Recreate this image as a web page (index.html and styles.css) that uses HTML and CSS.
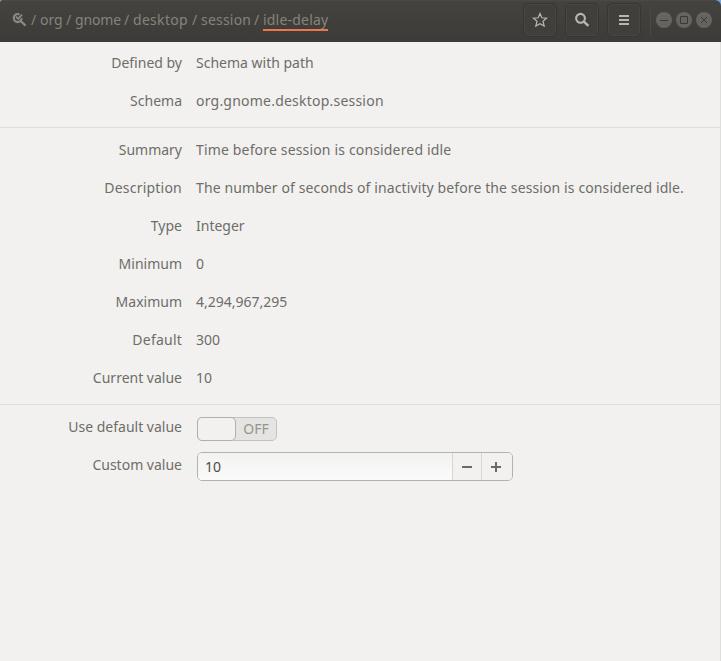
FILE: index.html
```html
<!DOCTYPE html>
<html lang="en">
<head>
<meta charset="utf-8">
<title>idle-delay</title>
<link rel="stylesheet" href="styles.css">
</head>
<body>
<div class="window">
  <header class="titlebar">
    <nav class="path">
      <svg class="path-icon" width="15" height="16" viewBox="0 0 15 16"><path d="M7.6 2.5A4 4 0 1 0 9.7 6.2M8.6 9l5 4.6" fill="none" stroke="currentColor" stroke-width="2.2"/><path d="M4 4.6l2.2 2.2 3.9-4.1" fill="none" stroke="currentColor" stroke-width="1.9"/></svg>
      <span class="slash">/</span><span class="crumb org">org</span>
      <span class="slash">/</span><span class="crumb gnome">gnome</span>
      <span class="slash">/</span><span class="crumb desktop">desktop</span>
      <span class="slash">/</span><span class="crumb session">session</span>
      <span class="slash">/</span><span class="crumb current">idle-delay</span>
    </nav>
    <div class="tools">
      <button class="tool" aria-label="Bookmark"><svg width="16" height="16" viewBox="0 0 16 16"><path d="M8 1.5l1.8 4.3 4.8.4-3.6 3.1 1.2 4.8L8 11.7l-4.2 2.4L5 9.3 1.4 6.2l4.8-.4z" fill="none" stroke="currentColor" stroke-width="1.2"/></svg></button>
      <button class="tool" aria-label="Search"><svg width="16" height="16" viewBox="0 0 16 16"><circle cx="6.5" cy="6.3" r="4.4" fill="none" stroke="currentColor" stroke-width="2.1"/><path d="M9.6 9.4l4.8 4.5" stroke="currentColor" stroke-width="2.5"/></svg></button>
      <button class="tool" aria-label="Menu"><svg width="16" height="16" viewBox="0 0 16 16"><path d="M3 3h10v2H3zM3 7h10v2H3zM3 11h10v2H3z" fill="currentColor"/></svg></button>
    </div>
    <div class="controls">
      <button class="control" aria-label="Minimize"><svg width="16" height="16" viewBox="0 0 16 16"><path d="M4 8.5h8" stroke="currentColor"/></svg></button>
      <button class="control" aria-label="Maximize"><svg width="16" height="16" viewBox="0 0 16 16"><path d="M4.5 4.5h7v7h-7z" fill="none" stroke="currentColor"/></svg></button>
      <button class="control" aria-label="Close"><svg width="16" height="16" viewBox="0 0 16 16"><path d="M5 5l6 6M11 5l-6 6" stroke="currentColor"/></svg></button>
    </div>
  </header>
  <main>
    <section class="group first">
      <div class="row"><span class="label">Defined by</span><span>Schema with path</span></div>
      <div class="row"><span class="label">Schema</span><span class="loose">org.gnome.desktop.session</span></div>
    </section>
    <section class="group">
      <div class="row"><span class="label">Summary</span><span class="wide">Time before session is considered idle</span></div>
      <div class="row"><span class="label loose">Description</span><span class="prose">The number of seconds of inactivity before the session is considered idle.</span></div>
      <div class="row"><span class="label">Type</span><span>Integer</span></div>
      <div class="row"><span class="label">Minimum</span><span>0</span></div>
      <div class="row"><span class="label">Maximum</span><span>4,294,967,295</span></div>
      <div class="row"><span class="label loose">Default</span><span>300</span></div>
      <div class="row"><span class="label">Current value</span><span>10</span></div>
    </section>
    <section class="group last">
      <div class="row"><span class="label">Use default value</span><div class="switch"><span class="knob"></span><span class="state">OFF</span></div></div>
      <div class="row"><span class="label">Custom value</span><div class="spin"><span class="entry">10</span><button class="step" aria-label="Decrease"><svg width="10" height="10" viewBox="0 0 10 10"><path d="M0 4h10v2H0z" fill="currentColor"/></svg></button><button class="step" aria-label="Increase"><svg width="10" height="10" viewBox="0 0 10 10"><path d="M0 4h4V0h2v4h4v2H6v4H4V6H0z" fill="currentColor"/></svg></button></div></div>
    </section>
  </main>
</div>
</body>
</html>
```
FILE: styles.css
```css
* { box-sizing: border-box; }
body {
  margin: 0;
  background: #75a5dc;
  color: #6e6d69;
  font: 14px/20px "Noto Sans", "Open Sans", sans-serif;
}
button { padding: 0; font: inherit; }
svg { display: block; flex: none; }
.window {
  display: flex;
  flex-direction: column;
  height: 661px;
  border-radius: 3px 6px 0 0;
  overflow: hidden;
}
main { flex: 1; background: #f2f1ef; border-right: 1px solid #dededc; }
.titlebar {
  display: flex;
  height: 42px;
  background: linear-gradient(#444340, #3c3b37);
  border-top: 1px solid #4a4945;
  color: #85847c;
}
.path {
  display: flex;
  flex: 1;
  height: 38px;
  align-items: center;
  padding-left: 12px;
}
.path-icon { color: #8b8983; margin-right: 4px; }
.slash { width: 9px; }
.crumb { white-space: nowrap; }
.org { width: 26px; }
.gnome { width: 49px; letter-spacing: -0.15px; }
.desktop { width: 59px; letter-spacing: 0.3px; }
.session { width: 53px; letter-spacing: 0.2px; }
.current { width: 65px; height: 21px; border-bottom: 2px solid #ed764d; margin-top: 1px; line-height: 19px; letter-spacing: 0.2px; }
.tools { display: flex; gap: 8px; padding-top: 2px; }
.tool {
  display: flex;
  align-items: center;
  justify-content: center;
  width: 34px;
  height: 34px;
  background: #403f3b;
  border: 1px solid #373632;
  border-radius: 5px;
  box-shadow: inset 0 0 0 1px #474642;
  color: #b8b7ad;
}
.controls {
  display: flex;
  gap: 4px;
  height: 30px;
  margin: 4px 9px 0 9px;
  padding: 7px 0 0 5px;
  border-left: 1px solid #4a4945;
}
.control {
  width: 16px;
  height: 16px;
  border: 0;
  border-radius: 50%;
  background: #65645e;
  color: #3b3a36;
}
.group { padding: 3px 0 7px; border-bottom: 1px solid #dededc; }
.first { padding-top: 2px; }
.last { border: 0; }
.row { display: flex; height: 38px; align-items: center; white-space: nowrap; }
.label { width: 182px; margin-right: 14px; text-align: right; }
.loose { letter-spacing: 0.22px; }
.wide { letter-spacing: 0.16px; }
.prose { letter-spacing: 0.11px; }
.switch {
  display: flex;
  width: 80px;
  height: 24px;
  margin: 4px 0 0 1px;
  background: #e5e4e2;
  border: 1px solid #c3c2bf;
  border-radius: 5px;
  color: #96948f;
}
.knob { width: 39px; height: 24px; margin: -1px 0 0 -1px; background: #f2f1ef; border: 1px solid #b1b0ac; border-radius: 5px; }
.state { flex: 1; text-align: center; line-height: 21px; }
.spin {
  display: flex;
  width: 316px;
  height: 29px;
  margin: 3px 0 0 1px;
  border: 1px solid #b3b2ae;
  border-radius: 5px;
  overflow: hidden;
}
.entry { flex: 1; padding-left: 7px; line-height: 28px; color: #4c4b48; background: linear-gradient(#f2f2f1, #fafafa); }
.step {
  display: flex;
  align-items: center;
  justify-content: center;
  width: 29px;
  border: 0;
  border-left: 1px solid #d8d7d5;
  background: #f2f1ef;
  color: #6b6a67;
}
.step:last-child { width: 31px; padding-right: 2px; }
```
